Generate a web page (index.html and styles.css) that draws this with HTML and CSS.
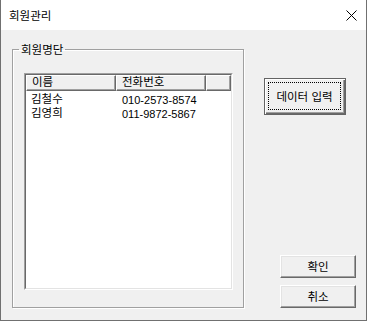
FILE: index.html
```html
<!DOCTYPE html>
<html lang="ko">
<head>
<meta charset="utf-8">
<link rel="stylesheet" href="styles.css">
</head>
<body>
<div class="window">
  <div class="titlebar">
    <span class="title">회원관리</span>
    <span class="close"><svg width="11" height="11" viewBox="0 0 11 11"><path d="M0.5 0.5L10.5 10.5M10.5 0.5L0.5 10.5" stroke="#000" stroke-width="1" fill="none"/></svg></span>
  </div>
  <div class="body">
    <fieldset class="group">
      <legend class="legend">회원명단</legend>
      <div class="list">
        <div class="list-inner">
          <div class="lv-head">
            <div class="hcell c1">이름</div>
            <div class="hcell c2">전화번호</div>
            <div class="hcell c3"></div>
          </div>
          <div class="lv-row">
            <div class="cell c1">김철수</div>
            <div class="cell c2 num">010-2573-8574</div>
          </div>
          <div class="lv-row">
            <div class="cell c1">김영희</div>
            <div class="cell c2 num">011-9872-5867</div>
          </div>
        </div>
      </div>
    </fieldset>
    <div class="side">
      <button class="btn btn-default"><span class="focus">데이터 입력</span></button>
      <button class="btn btn-ok">확인</button>
      <button class="btn btn-cancel">취소</button>
    </div>
  </div>
</div>
</body>
</html>
```
FILE: styles.css
```css
html, body {
  margin: 0;
  padding: 0;
}
body {
  font-family: "Noto Sans CJK KR", "Noto Sans", sans-serif;
  font-size: 11.5px;
  color: #000;
  background: #fff;
}
.window {
  width: 367px;
  height: 321px;
  box-sizing: border-box;
  border: 1px solid #707070;
  border-top: none;
  display: flex;
  flex-direction: column;
}
.titlebar {
  height: 30px;
  flex: none;
  background: #fff;
  display: flex;
  align-items: center;
  padding-left: 8px;
  padding-right: 9px;
}
.title {
  line-height: 16px;
}
.close {
  margin-left: auto;
  display: flex;
}
.body {
  flex: 1;
  background: #f0f0f0;
  display: flex;
  padding: 0 0 12px 11px;
  min-height: 0;
}
.group {
  margin: 11px 0 0 0;
  padding: 0;
  width: 232px;
  box-sizing: border-box;
  border: 1px solid #a0a0a0;
  box-shadow: 1px 1px 0 #fff, inset 1px 1px 0 #fff;
  min-width: 0;
}
.legend {
  margin-left: 6px;
  padding: 0 2px;
  line-height: 16px;
}
.list {
  margin: 16px 0 0 11px;
  width: 209px;
  height: 217px;
  box-sizing: border-box;
  border: 1px solid;
  border-color: #a0a0a0 #fff #fff #a0a0a0;
  font-family: "Liberation Sans", "Noto Sans CJK KR", sans-serif;
}
.list-inner {
  height: 100%;
  box-sizing: border-box;
  border: 1px solid;
  border-color: #696969 #e3e3e3 #e3e3e3 #696969;
  background: #fff;
}
.lv-head {
  display: flex;
  height: 16px;
}
.hcell {
  box-sizing: border-box;
  height: 16px;
  background: #f0f0f0;
  border: 1px solid;
  border-color: #fff #696969 #696969 #fff;
  box-shadow: inset -1px -1px 0 #a0a0a0;
  padding-left: 5px;
  line-height: 13px;
  white-space: nowrap;
}
.c1 { width: 90px; flex: none; }
.c2 { width: 90px; flex: none; }
.c3 { flex: 1; }
.lv-row {
  display: flex;
  height: 14px;
}
.cell {
  box-sizing: border-box;
  white-space: nowrap;
  line-height: 14px;
  padding-top: 1px;
}
.cell.c1 { padding-left: 5px; }
.cell.c2 { padding-left: 6px; }
.cell.num {
  font-size: 11px;
  padding-top: 2px;
}
.side {
  flex: 1;
  display: flex;
  flex-direction: column;
  align-items: flex-end;
  padding: 48px 10px 0 0;
}
.btn {
  font-family: inherit;
  font-size: 11.5px;
  color: #000;
  background: #f0f0f0;
  box-sizing: border-box;
  margin: 0;
  padding: 0;
  border: 1px solid;
  border-color: #fff #696969 #696969 #fff;
  box-shadow: inset -1px -1px 0 #a0a0a0, inset 1px 1px 0 #e3e3e3;
  width: 76px;
  height: 23px;
  line-height: 19px;
  display: flex;
  align-items: center;
  justify-content: center;
}
.btn-default {
  width: 82px;
  height: 37px;
  margin-right: 10px;
  border: 1px solid #646464;
  box-shadow: inset 1px 1px 0 #fff, inset -1px -1px 0 #696969, inset -2px -2px 0 #a0a0a0;
  padding: 3px 4px 4px 3px;
  align-items: stretch;
}
.focus {
  flex: 1;
  border: 1px dotted #000;
  display: flex;
  align-items: center;
  justify-content: center;
}
.btn-ok {
  margin-top: auto;
}
.btn-cancel {
  margin-top: 7px;
}
```
